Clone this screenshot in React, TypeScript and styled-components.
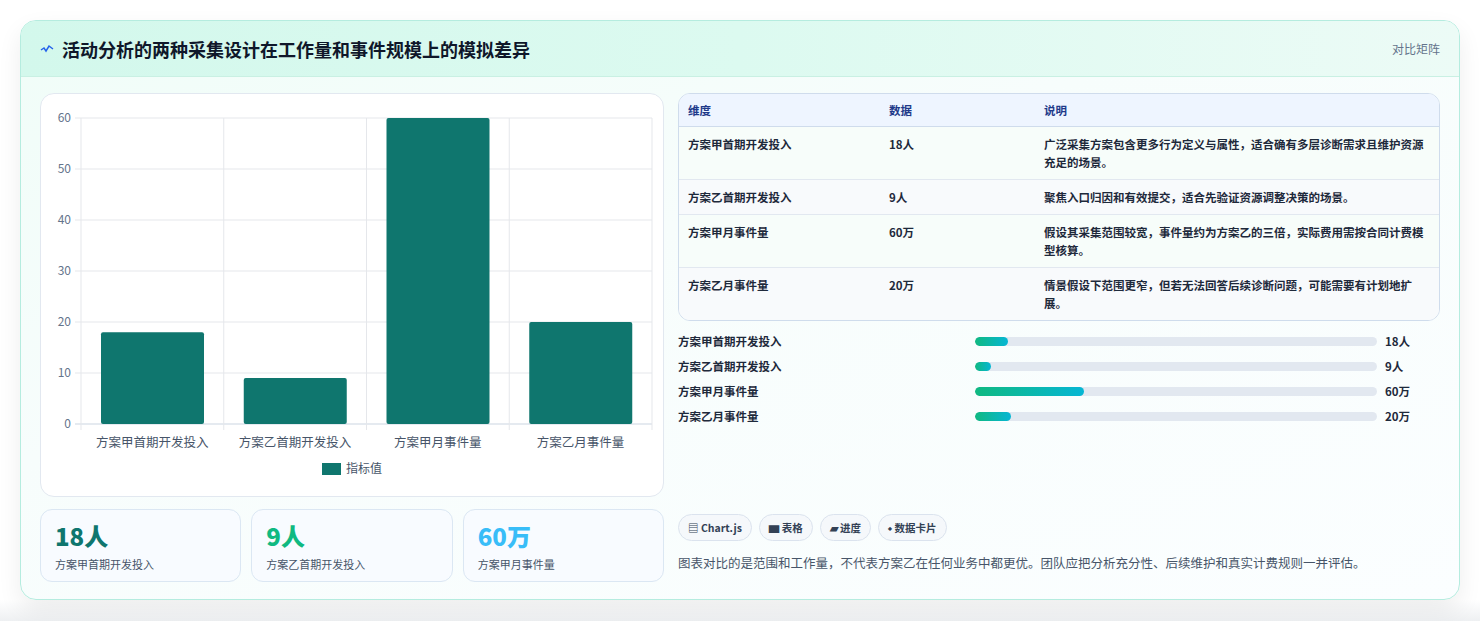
import React from 'react';
import styled, { createGlobalStyle } from 'styled-components';

const Global = createGlobalStyle`
  body { margin: 0; background: #f3f4f6; font-family: "Noto Sans CJK SC", "Noto Sans", sans-serif; }
`;

const Page = styled.div`
  padding: 20px 20px 21px 20px;
  background: linear-gradient(#ffffff 0, #ffffff 600px, #eef0f2 621px);
  height: 621px;
  box-sizing: border-box;
`;

const Card = styled.div`
  height: 580px;
  box-sizing: border-box;
  border: 1px solid #b5ecdf;
  border-radius: 16px;
  overflow: hidden;
  background: linear-gradient(160deg, #f0fdf8 0%, #f7fdfc 40%, #fbfeff 100%);
  box-shadow: 0 10px 24px rgba(0, 0, 0, 0.07);
  display: flex;
  flex-direction: column;
`;

const Header = styled.div`
  height: 55px;
  flex-shrink: 0;
  display: flex;
  align-items: center;
  justify-content: space-between;
  padding: 0 19px;
  background: linear-gradient(90deg, #d3f8ec 0%, #dcfaf0 50%, #ecfbf6 100%);
  border-bottom: 1px solid #c9f0e3;
`;

const Title = styled.h1`
  margin: 0;
  font-size: 18px;
  font-weight: 700;
  color: #0f172a;
  display: flex;
  align-items: center;
  gap: 8px;
`;

const Tag = styled.span`
  font-size: 12px;
  color: #64748b;
`;

const Body = styled.div`
  display: grid;
  grid-template-columns: 624px 762px;
  gap: 14px;
  padding: 16px 19px 18px 19px;
  flex: 1;
`;

const LeftCol = styled.div`
  display: flex;
  flex-direction: column;
  gap: 12px;
`;

const ChartCard = styled.div`
  height: 404px;
  background: #fff;
  border: 1px solid #e2e8f0;
  border-radius: 14px;
  box-sizing: border-box;
`;

const Stats = styled.div`
  display: grid;
  grid-template-columns: 1fr 1fr 1fr;
  gap: 10px;
`;

const Stat = styled.div`
  height: 73px;
  box-sizing: border-box;
  border: 1px solid #dbe7f3;
  border-radius: 12px;
  background: #f8fbff;
  padding: 10px 14px;
`;

const StatValue = styled.div<{ $c: string }>`
  font-size: 24px;
  font-weight: 800;
  color: ${(p) => p.$c};
  line-height: 32px;
`;

const StatLabel = styled.div`
  font-size: 11px;
  color: #475569;
  margin-top: 4px;
`;

const RightCol = styled.div`
  display: flex;
  flex-direction: column;
`;

const Table = styled.table`
  width: 100%;
  border-collapse: separate;
  border-spacing: 0;
  border: 1px solid #cfdcec;
  border-radius: 12px;
  overflow: hidden;
  font-size: 11.5px;
  color: #1e293b;
  font-weight: 600;
  background: #fff;
`;

const Th = styled.th<{ $w?: number }>`
  text-align: left;
  font-weight: 600;
  color: #1e3a8a;
  background: #eef5ff;
  height: 32px;
  padding: 0 9px;
  border-bottom: 1px solid #cfdcec;
  width: ${(p) => (p.$w ? `${p.$w}px` : 'auto')};
`;

const Td = styled.td<{ $alt: boolean; $last: boolean }>`
  padding: 8px 9px;
  line-height: 18px;
  vertical-align: top;
  background: ${(p) => (p.$alt ? '#f8fafc' : '#f7fdfa')};
  border-bottom: ${(p) => (p.$last ? 'none' : '1px solid #e2e8f0')};
`;

const Bars = styled.div`
  margin-top: 12px;
  display: flex;
  flex-direction: column;
  gap: 9px;
`;

const BarRow = styled.div`
  display: grid;
  grid-template-columns: 289px 402px auto;
  align-items: center;
  gap: 8px;
  font-size: 11.5px;
  font-weight: 600;
  color: #1e293b;
  height: 16px;
`;

const Track = styled.div`
  height: 9px;
  border-radius: 5px;
  background: #e2e8f0;
  overflow: hidden;
`;

const Fill = styled.div`
  height: 100%;
  border-radius: 5px;
  background: linear-gradient(90deg, #10b981, #06b6d4);
`;

const Chips = styled.div`
  margin-top: auto;
  display: flex;
  gap: 7px;
`;

const Chip = styled.span`
  height: 27px;
  box-sizing: border-box;
  padding: 0 9px;
  display: flex;
  align-items: center;
  gap: 3px;
  border: 1px solid #dbe3ee;
  border-radius: 14px;
  background: #f5f8fb;
  font-size: 10.5px;
  font-weight: 700;
  color: #334155;
`;

const Note = styled.p`
  margin: 12px 0 10px;
  font-size: 12.5px;
  color: #475569;
`;

const rows = [
  ['方案甲首期开发投入', '18人', '广泛采集方案包含更多行为定义与属性，适合确有多层诊断需求且维护资源充足的场景。'],
  ['方案乙首期开发投入', '9人', '聚焦入口归因和有效提交，适合先验证资源调整决策的场景。'],
  ['方案甲月事件量', '60万', '假设其采集范围较宽，事件量约为方案乙的三倍，实际费用需按合同计费模型核算。'],
  ['方案乙月事件量', '20万', '情景假设下范围更窄，但若无法回答后续诊断问题，可能需要有计划地扩展。'],
];

const bars = [
  ['方案甲首期开发投入', 8.2, '18人'],
  ['方案乙首期开发投入', 4, '9人'],
  ['方案甲月事件量', 27, '60万'],
  ['方案乙月事件量', 9, '20万'],
] as const;

const Chart = () => {
  const L = 40, R = 611, Y0 = 330, step = 51;
  const vals = [18, 9, 60, 20];
  const labels = ['方案甲首期开发投入', '方案乙首期开发投入', '方案甲月事件量', '方案乙月事件量'];
  const cw = (R - L) / 4;
  return (
    <svg width="622" height="402" fontFamily='"Noto Sans CJK SC", sans-serif'>
      {[0, 1, 2, 3, 4, 5, 6].map((i) => (
        <g key={i}>
          <line x1={L - 6} x2={R} y1={Y0 - i * step} y2={Y0 - i * step} stroke={i === 0 ? '#cbd5e1' : '#e5e7eb'} />
          <text x={L - 10} y={Y0 - i * step + 4} textAnchor="end" fontSize="12" fill="#64748b">{i * 10}</text>
        </g>
      ))}
      {[0, 1, 2, 3, 4].map((i) => (
        <line key={i} x1={L + i * cw} x2={L + i * cw} y1={Y0 - 6 * step} y2={Y0 + 6} stroke="#e5e7eb" />
      ))}
      {vals.map((v, i) => {
        const h = (v / 10) * step;
        return <rect key={i} x={L + i * cw + 20} y={Y0 - h} width={103} height={h} rx="2" fill="#0f766e" />;
      })}
      {labels.map((t, i) => (
        <text key={t} x={L + i * cw + cw / 2} y={353} textAnchor="middle" fontSize="12.5" fill="#475569">{t}</text>
      ))}
      <rect x="281" y="369" width="19" height="12" fill="#0f766e" />
      <text x="305" y="379" fontSize="12" fill="#475569">指标值</text>
    </svg>
  );
};

export default function App() {
  return (
    <>
      <Global />
      <Page>
        <Card>
          <Header>
            <Title>
              <svg width="14" height="10" viewBox="0 0 14 10">
                <path d="M1 6 L4 4 L6 7 L9 2 L13 5" fill="none" stroke="#2563eb" strokeWidth="1.5" />
              </svg>
              活动分析的两种采集设计在工作量和事件规模上的模拟差异
            </Title>
            <Tag>对比矩阵</Tag>
          </Header>
          <Body>
            <LeftCol>
              <ChartCard>
                <Chart />
              </ChartCard>
              <Stats>
                <Stat><StatValue $c="#0f766e">18人</StatValue><StatLabel>方案甲首期开发投入</StatLabel></Stat>
                <Stat><StatValue $c="#10b981">9人</StatValue><StatLabel>方案乙首期开发投入</StatLabel></Stat>
                <Stat><StatValue $c="#38bdf8">60万</StatValue><StatLabel>方案甲月事件量</StatLabel></Stat>
              </Stats>
            </LeftCol>
            <RightCol>
              <Table>
                <thead>
                  <tr><Th $w={183}>维度</Th><Th $w={137}>数据</Th><Th>说明</Th></tr>
                </thead>
                <tbody>
                  {rows.map((r, i) => (
                    <tr key={i}>
                      {r.map((c, j) => (
                        <Td key={j} $alt={i % 2 === 1} $last={i === rows.length - 1}>{c}</Td>
                      ))}
                    </tr>
                  ))}
                </tbody>
              </Table>
              <Bars>
                {bars.map(([l, w, v]) => (
                  <BarRow key={l}>
                    <span>{l}</span>
                    <Track><Fill style={{ width: `${w}%` }} /></Track>
                    <span>{v}</span>
                  </BarRow>
                ))}
              </Bars>
              <Chips>
                <Chip>▤ Chart.js</Chip>
                <Chip>▆ 表格</Chip>
                <Chip>▰ 进度</Chip>
                <Chip>⬩ 数据卡片</Chip>
              </Chips>
              <Note>图表对比的是范围和工作量，不代表方案乙在任何业务中都更优。团队应把分析充分性、后续维护和真实计费规则一并评估。</Note>
            </RightCol>
          </Body>
        </Card>
      </Page>
    </>
  );
}
